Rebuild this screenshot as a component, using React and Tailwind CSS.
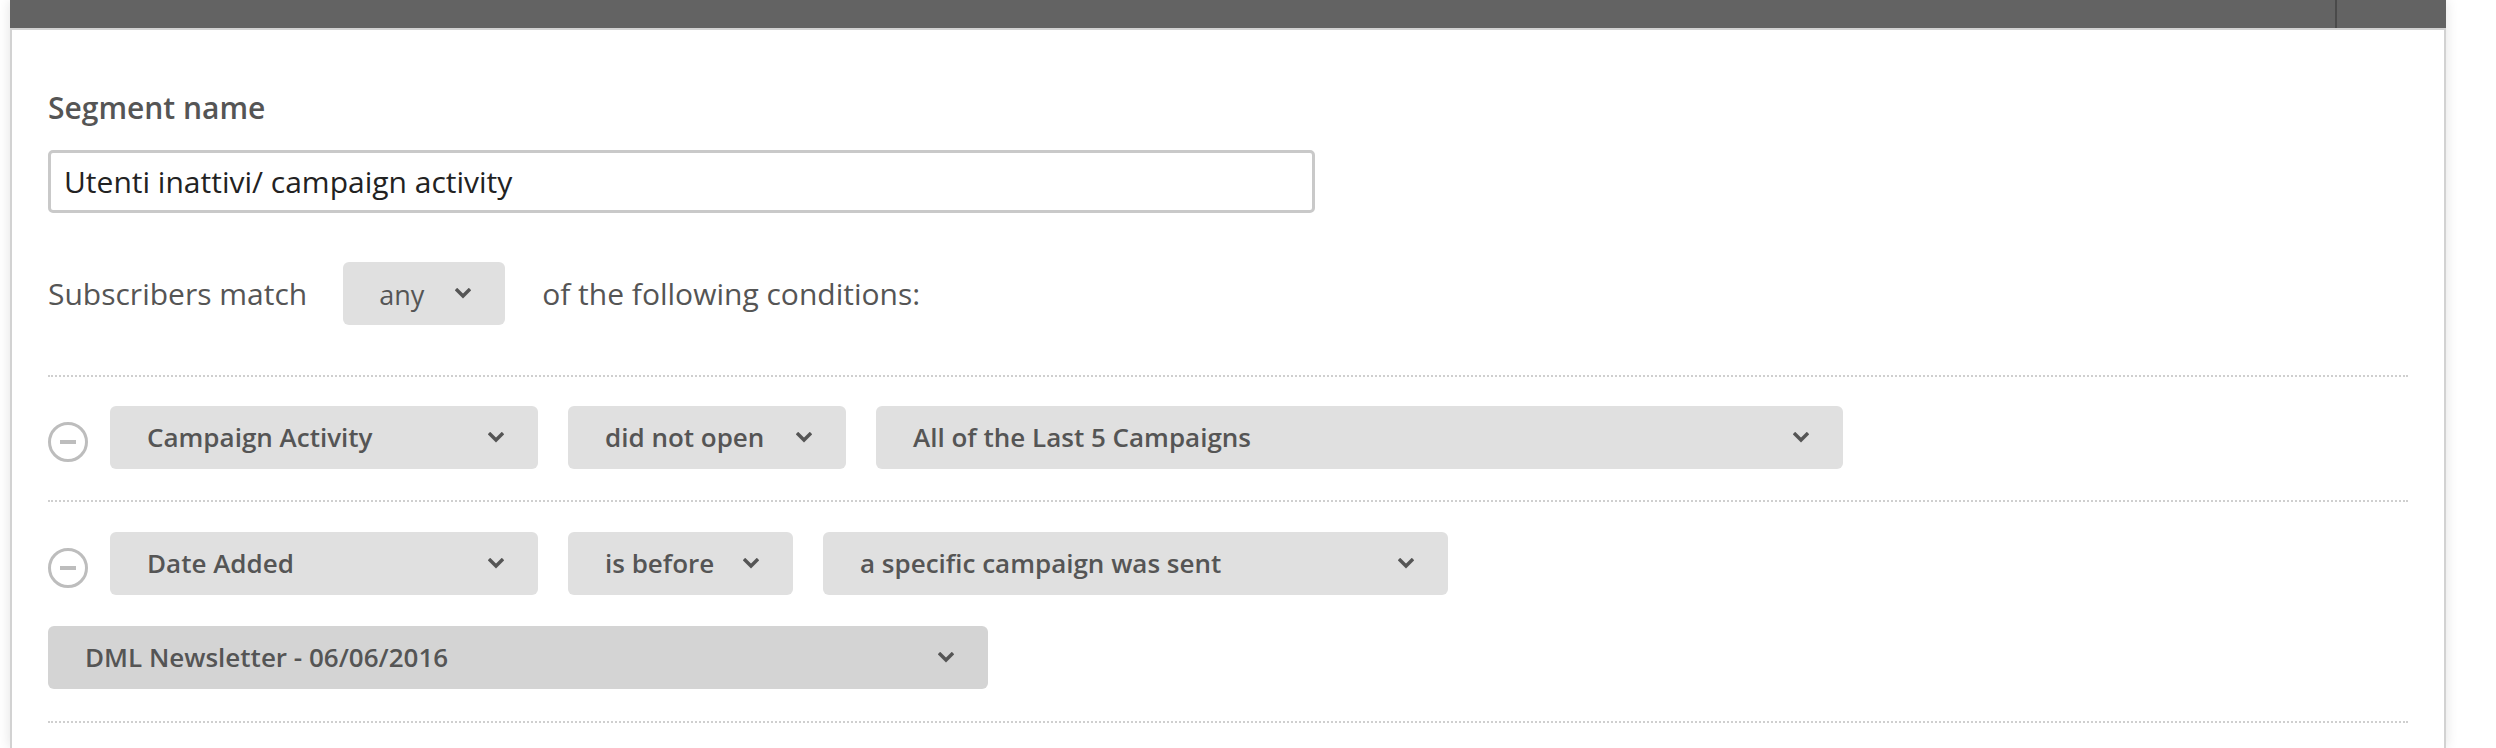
import React from 'react';

const Chevron = () => (
  <svg width="16" height="11" viewBox="0 0 16 11" className="shrink-0">
    <path d="M2.2 2.2 L8 8 L13.8 2.2" fill="none" stroke="#555" strokeWidth="3.4" strokeLinecap="square" />
  </svg>
);

const Select = ({ label, width, h = 'h-[63px]', bg = 'bg-[#e0e0e0]' }) => (
  <div
    className={`${h} ${bg} pl-[37px] pr-[34px] rounded-[6px] flex items-center justify-between text-[26px] font-semibold text-[#555] shrink-0`}
    style={{ width }}
  >
    <span>{label}</span>
    <Chevron />
  </div>
);

const Remove = () => (
  <div className="w-[40px] h-[40px] mt-[8px] rounded-full border-[3px] border-[#bdbdbd] flex items-center justify-center shrink-0">
    <div className="w-[16px] h-[4px] bg-[#bdbdbd]" />
  </div>
);

const Dotted = ({ mt }) => <div className={`${mt} border-t-2 border-dotted border-[#cfcfcf]`} />;

export default function App() {
  return (
    <div className="w-[2496px] h-[748px] bg-white overflow-hidden" style={{ fontFamily: '"Open Sans", "Noto Sans", sans-serif' }}>
      <div className="ml-[10px] w-[2436px] h-full shadow-[0_0_12px_rgba(0,0,0,0.12)]">
        {/* barre du haut */}
        <div className="h-[28px] bg-[#636363] flex">
          <div className="flex-1" />
          <div className="w-[111px] border-l-2 border-[#4a4a4a]" />
        </div>

        <div className="h-[720px] bg-white border-t-2 border-x-2 border-[#d2d2d2] px-[36px]">
          <div className="pt-[58px] text-[30px] leading-[40px] font-semibold text-[#555]">Segment name</div>

          <div className="mt-[22px] w-[1267px] h-[63px] border-[3px] border-[#c9c9c9] rounded-[5px] flex items-center pl-[13px] text-[30px] text-[#222]">
            Utenti inattivi/ campaign activity
          </div>

          <div className="mt-[49px] h-[63px] flex items-center text-[30px] text-[#555]">
            <span>Subscribers match</span>
            <div className="ml-[36px] w-[162px] h-[63px] bg-[#e0e0e0] rounded-[6px] flex items-center pl-[36px] pr-[34px] justify-between text-[27px] font-medium">
              <span className="mt-[4px]">any</span>
              <Chevron />
            </div>
            <span className="ml-[37px]">of the following conditions:</span>
          </div>

          <Dotted mt="mt-[50px]" />

          <div className="mt-[29px] flex items-center">
            <Remove />
            <div className="ml-[22px] flex gap-[30px]">
              <Select label="Campaign Activity" width={428} />
              <Select label="did not open" width={278} />
              <Select label="All of the Last 5 Campaigns" width={967} />
            </div>
          </div>

          <Dotted mt="mt-[31px]" />

          <div className="mt-[30px] flex items-center">
            <Remove />
            <div className="ml-[22px] flex gap-[30px]">
              <Select label="Date Added" width={428} />
              <Select label="is before" width={225} />
              <Select label="a specific campaign was sent" width={625} />
            </div>
          </div>

          <div className="mt-[31px]">
            <Select label="DML Newsletter - 06/06/2016" width={940} bg="bg-[#d4d4d4]" />
          </div>

          <Dotted mt="mt-[32px]" />
        </div>
      </div>
    </div>
  );
}
